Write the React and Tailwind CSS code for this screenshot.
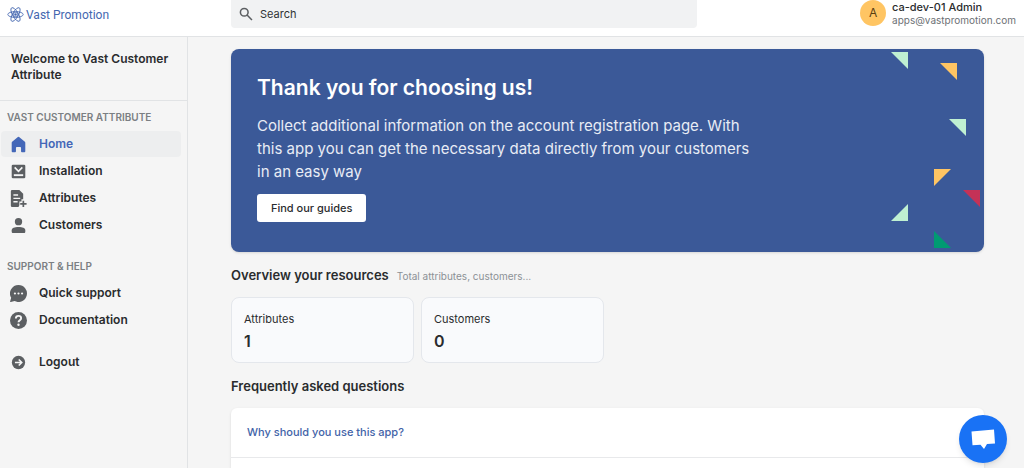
import { useState } from "react";

const menu = [
  { name: "Home", icon: HomeIcon },
  { name: "Installation", icon: InstallIcon },
  { name: "Attributes", icon: AttributesIcon },
  { name: "Customers", icon: CustomersIcon },
];

const support = [
  { name: "Quick support", icon: ChatIcon },
  { name: "Documentation", icon: HelpIcon },
];

const stats = [
  { label: "Attributes", value: 1 },
  { label: "Customers", value: 0 },
];

const questions = [
  { q: "Why should you use this app?", a: "It collects additional customer data on the registration page." },
];

function Icon({ children }) {
  return (
    <svg viewBox="0 0 20 20" className="size-[17px] shrink-0" fill="currentColor" aria-hidden="true">
      {children}
    </svg>
  );
}

function HomeIcon() {
  return (
    <Icon>
      <path d="M9.300 1.200a1 1 0 0 1 1.400 0l6.800 5.600c.3.3.5.7.5 1.100V18a1 1 0 0 1-1 1h-3a1 1 0 0 1-1-1v-4a1 1 0 0 0-1-1H8a1 1 0 0 0-1 1v4a1 1 0 0 1-1 1H3a1 1 0 0 1-1-1V7.900c0-.4.2-.8.5-1.100z" />
    </Icon>
  );
}

function InstallIcon() {
  return (
    <Icon>
      <rect x="2" y="2" width="16" height="16" rx="1.500" />
      <path d="M4.500 13.200h11v2.200h-11z" fill="#f5f5f5" />
      <path d="M5.500 5.200l4.500 4.600 4.500-4.600" fill="none" stroke="#f5f5f5" strokeWidth="2" />
    </Icon>
  );
}

function AttributesIcon() {
  return (
    <Icon>
      <path fillRule="evenodd" d="M2.500 0H11l4.500 4.500V11h-2v2.500H11V18l-1 2H2.500A1.500 1.500 0 0 1 1 18.500v-17A1.500 1.500 0 0 1 2.500 0zM4 5v1.700h5.500V5zm0 4v1.700h8V9zm0 4v1.700h5V13z" />
      <path d="M14.700 12.500h2v2.800h2.800v2h-2.800v2.700h-2v-2.700h-2.700v-2h2.700z" />
    </Icon>
  );
}

function CustomersIcon() {
  return (
    <Icon>
      <circle cx="10" cy="5.500" r="4.300" />
      <path d="M2 15.500c0-2.500 3.200-3.800 8-3.800s8 1.300 8 3.800v1.800c0 .8-.6 1.500-1.500 1.500h-13c-.9 0-1.500-.7-1.500-1.500z" />
    </Icon>
  );
}

function ChatIcon() {
  return (
    <Icon>
      <path fillRule="evenodd" d="M10 0a10 10 0 1 1-4.600 18.900L1 20c-.6.1-1-.4-.8-1l1.200-3.900A10 10 0 0 1 10 0zM5.800 8.700a1.300 1.300 0 1 0 0 2.600 1.300 1.300 0 0 0 0-2.600zm4.200 0a1.300 1.300 0 1 0 0 2.600 1.300 1.300 0 0 0 0-2.600zm4.200 0a1.300 1.300 0 1 0 0 2.600 1.300 1.300 0 0 0 0-2.600z" />
    </Icon>
  );
}

function HelpIcon() {
  return (
    <Icon>
      <circle cx="10" cy="10" r="10" />
      <path d="M6.900 7.500c0-1.800 1.400-2.900 3.100-2.900s3.100 1.100 3.100 2.700c0 2.300-3.100 2.300-3.100 4.700" fill="none" stroke="#f5f5f5" strokeWidth="2.200" />
      <circle cx="10" cy="15" r="1.400" fill="#f5f5f5" />
    </Icon>
  );
}

function LogoutIcon() {
  return (
    <Icon>
      <circle cx="10" cy="10" r="7.800" />
      <path d="M5.800 10h7.500M10.300 6.500l3.500 3.500-3.500 3.500" fill="none" stroke="#f5f5f5" strokeWidth="1.900" />
    </Icon>
  );
}

function Logo() {
  return (
    <a href="#home" className="flex items-center gap-[2px] text-[#4467b0]">
      <svg viewBox="0 0 32 32" className="size-[17px]" fill="none" stroke="currentColor" strokeWidth="1.600" aria-hidden="true">
        <ellipse cx="16" cy="16" rx="14.500" ry="5.500" />
        <ellipse cx="16" cy="16" rx="14.500" ry="5.500" transform="rotate(60 16 16)" />
        <ellipse cx="16" cy="16" rx="14.500" ry="5.500" transform="rotate(120 16 16)" />
        <circle cx="16" cy="16" r="4" />
        <circle cx="16" cy="16" r="1.500" fill="currentColor" />
      </svg>
      <span className="font-['Roboto',sans-serif] text-[12px] leading-4">Vast Promotion</span>
    </a>
  );
}

function NavItem({ item, active, onClick }) {
  const ItemIcon = item.icon;
  return (
    <li>
      <a
        href="#home"
        onClick={onClick}
        className={
          active
            ? "flex h-[26px] items-center gap-3 rounded bg-[#edeeef] pl-[9px] font-semibold text-[#4467b8]"
            : "flex h-[26px] items-center gap-3 rounded pl-[9px] font-semibold text-[#2a2c2e]"
        }
      >
        <span className={active ? "flex text-[#4467b8]" : "flex text-[#5c5f62]"}>
          <ItemIcon />
        </span>
        {item.name}
      </a>
    </li>
  );
}

function Confetti() {
  return (
    <svg viewBox="0 0 100 203" className="absolute top-0 right-0 h-[203px] w-[100px]" aria-hidden="true">
      <path d="M7 3h17v17z" fill="#bff0d2" />
      <path d="M56 14h17v17z" fill="#ffc563" />
      <path d="M65 70h17v17z" fill="#bff0d2" />
      <path d="M50 120h17l-17 17z" fill="#ffc563" />
      <path d="M79 141h17v17z" fill="#c43257" />
      <path d="M24 155v17H7z" fill="#bff0d2" />
      <path d="M50 182v17h17z" fill="#009b72" />
    </svg>
  );
}

export default function App() {
  const [page, setPage] = useState("Home");
  const [search, setSearch] = useState("");
  const [open, setOpen] = useState(null);

  return (
    <div className="flex min-h-screen flex-col bg-[#f5f5f5] font-['Inter',sans-serif] text-xs text-[#2a2c2e]">
      <header className="flex h-[37px] shrink-0 items-start border-b border-[#e1e3e5] bg-white">
        <div className="flex h-[29px] w-[231px] shrink-0 items-center pl-[7px]">
          <Logo />
        </div>
        <label className="flex h-7 w-[466px] items-center gap-[7px] rounded-b bg-[#f1f2f3] pl-2">
          <svg viewBox="0 0 20 20" className="size-[14px]" fill="none" stroke="#5c5f62" strokeWidth="2.200" aria-hidden="true">
            <circle cx="7.500" cy="7.500" r="5.500" />
            <path d="m11.500 11.500 7 7" />
          </svg>
          <input
            aria-label="Search"
            placeholder="Search"
            value={search}
            onChange={(e) => setSearch(e.target.value)}
            className="min-w-0 flex-1 bg-transparent text-[11px] outline-none placeholder:text-[#303335]"
          />
        </label>
        <div className="ml-auto flex items-center gap-[6px] pr-2">
          <span className="flex size-[26px] items-center justify-center rounded-full bg-[#ffc563] text-[#594011]">A</span>
          <div>
            <p className="text-[11px] leading-[14px] font-medium">ca-dev-01 Admin</p>
            <p className="text-[10px] leading-3 text-[#6d7175]">apps@vastpromotion.com</p>
          </div>
        </div>
      </header>

      <div className="flex flex-1">
        <aside className="w-[188px] shrink-0 border-r border-[#e1e3e5]">
          <h1 className="border-b border-[#e1e3e5] pt-[14px] pr-2 pb-[17px] pl-[11px] leading-4 font-semibold">
            Welcome to Vast Customer Attribute
          </h1>
          <nav className="pr-[6px] pl-px">
            <h2 className="mt-2 mb-[6px] pl-[6px] text-[10px] leading-4 font-semibold text-[#7b7f83]">VAST CUSTOMER ATTRIBUTE</h2>
            <ul className="space-y-px">
              {menu.map((item) => (
                <NavItem key={item.name} item={item} active={page === item.name} onClick={() => setPage(item.name)} />
              ))}
            </ul>
            <h2 className="mt-5 mb-[6px] pl-[6px] text-[10px] leading-4 font-semibold text-[#7b7f83]">SUPPORT &amp; HELP</h2>
            <ul className="space-y-px">
              {support.map((item) => (
                <NavItem key={item.name} item={item} active={page === item.name} onClick={() => setPage(item.name)} />
              ))}
            </ul>
            <ul className="mt-4">
              <NavItem item={{ name: "Logout", icon: LogoutIcon }} active={false} />
            </ul>
          </nav>
        </aside>

        <main className="flex min-w-0 flex-1 flex-col pt-3 pr-10 pl-[43px]">
          <section className="relative rounded-lg bg-[#3b5998] px-[26px] pt-[25px] pb-[30px] text-white shadow-sm">
            <Confetti />
            <h2 className="text-[21px] leading-7 font-semibold">Thank you for choosing us!</h2>
            <p className="mt-3 max-w-[500px] text-[15px] leading-[23px] text-[#e8ecf5]">
              Collect additional information on the account registration page. With this app you can get the necessary data
              directly from your customers in an easy way
            </p>
            <button className="mt-[11px] h-[28px] rounded-[3px] bg-white px-[14px] text-[11px] font-medium text-[#2a2c2e]">
              Find our guides
            </button>
          </section>

          <div className="mt-[13px] flex items-baseline gap-2">
            <h2 className="text-[13px] leading-5 font-semibold">Overview your resources</h2>
            <p className="text-[10px] text-[#8c9196]">Total attributes, customers...</p>
          </div>
          <div className="mt-3 flex gap-[7px]">
            {stats.map((s) => (
              <div key={s.label} className="h-[66px] w-[183px] rounded-lg border border-[#e4e7ec] bg-[#f9fafc] px-3 pt-[13px]">
                <p className="text-[11px] leading-4">{s.label}</p>
                <p className="mt-[2px] text-base leading-6 font-semibold">{s.value}</p>
              </div>
            ))}
          </div>

          <h2 className="mt-[13px] text-[13px] leading-5 font-semibold">Frequently asked questions</h2>
          <div className="mt-3 flex-1 rounded-t-md bg-white shadow">
            {questions.map((item, i) => (
              <div key={item.q} className="border-b border-[#e8e9eb]">
                <button onClick={() => setOpen(open === i ? null : i)} className="h-[49px] w-full px-4 text-left text-[11px] font-medium text-[#4263a8]">
                  {item.q}
                </button>
                {open === i && <p className="px-4 pb-4">{item.a}</p>}
              </div>
            ))}
          </div>
        </main>
      </div>

      <button aria-label="Open chat" className="fixed right-[17px] bottom-[5px] flex size-12 items-center justify-center rounded-full bg-[#1972f5] shadow-md">
        <svg viewBox="0 0 24 21" className="w-6" fill="#fff" aria-hidden="true">
          <path d="M.5 2.500 23 .5l1 14-8 .6-3 4.900-3.500-4.300-8 .6z" />
        </svg>
      </button>
    </div>
  );
}
